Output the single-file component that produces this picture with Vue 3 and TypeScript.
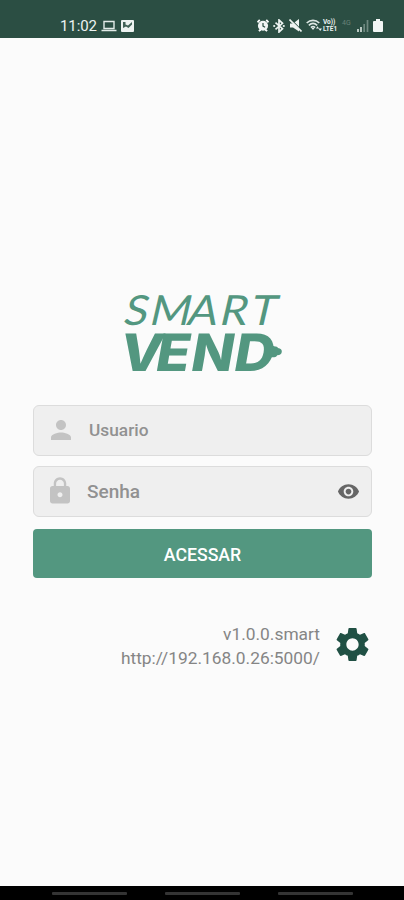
<script setup lang="ts">
import { ref } from 'vue'

const smartX = '2 26.500 62 92.500 121'
const vendX = '-2.400 31.200 64 103.600'
const user = ref('')
const password = ref('')
const visible = ref(false)
</script>

<template>
  <div class="screen">
    <header class="status">
      <div class="left">
        <span class="clock">11:02</span>
        <svg width="16" height="12" viewBox="0 0 16 12"><path d="M3 1.5h10v7H3zM.5 10.5h15" fill="none" stroke="#e2ebe8" stroke-width="1.4" /></svg>
        <svg width="13" height="12" viewBox="0 0 13 12"><rect width="13" height="12" rx="1" fill="#edf3f1" /><path d="M2 8V2h2.500v2.500L7 5.500 11 2v2.500L7.500 8 5 6.500z" fill="#416257" /></svg>
      </div>
      <div class="right">
        <svg width="12" height="13" viewBox="0 0 13 13"><path d="M.5 3L3 .5M12.5 3L10 .5M2 12.500L4 11M11 12.500L9 11" stroke="#fff" stroke-width="2" /><circle cx="6.500" cy="6.800" r="5.500" fill="#f2f6f5" /><path d="M6.500 3.700v3.500l2.300 1.200" fill="none" stroke="#2b4e43" stroke-width="1.300" /></svg>
        <svg width="12" height="14" viewBox="0 0 12 14"><path d="M2.500 3.700l7 6L6 13V1l3.500 3.300-7 6" fill="none" stroke="#eef4f2" stroke-width="1.700" /><circle cx="1.200" cy="7" r="1.100" fill="#eef4f2" /><circle cx="10.800" cy="7" r="1.100" fill="#eef4f2" /></svg>
        <svg width="13" height="13" viewBox="0 0 13 13"><path d="M1 4.500h3L10 0v12.500L4 8.500H1z" fill="#eef4f2" /><path d="M1.500 0l11.500 11.500" stroke="#2b4e43" stroke-width="1.200" /><path d="M.5.500l12 12" stroke="#eef4f2" stroke-width="1.600" /></svg>
        <svg width="16" height="13" viewBox="0 0 16 13"><path d="M.7 4C4.300.500 9.700.500 13.300 4M2.800 6.300c2.600-2.300 5.800-2.300 8.400 0M4.900 8.600c1.300-1.200 2.900-1.200 4.200 0" fill="none" stroke="#dce6e2" stroke-width="1.600" /><path d="M5.500 9h3L7 11zM10 9.500l1.500-2.300L13 9.500zM12.500 9.500H16L14.200 12z" fill="#eef4f2" /></svg>
        <span class="volte"><span>Vo))</span><span>LTE1</span></span>
        <span class="network">4G</span>
        <svg width="12" height="12" viewBox="0 0 12 12"><path d="M1 9v3M4 7v5" stroke="#dce6e2" stroke-width="1.600" /><path d="M7.200 4v8M10.500 0v12" stroke="#6f8980" stroke-width="1.700" /></svg>
        <svg width="10" height="13" viewBox="0 0 10 13"><path d="M3 0h4v2h2q1 0 1 1v9q0 1-1 1H1q-1 0-1-1V3q0-1 1-1h2z" fill="#f2f6f5" /></svg>
      </div>
    </header>

    <main class="content">
      <svg class="logo" width="164" height="84" viewBox="0 0 164 84" role="img" aria-label="Smart Vend">
        <text class="thin" transform="translate(0 36.500) skewX(-13) scale(1.06 1)" :x="smartX" y="0">SMART</text>
        <text class="heavy" transform="translate(0 82.500) skewX(-10) scale(1.08 1)" :x="vendX" y="0">VEND</text>
        <path d="M151 57l4 1.500q2.500-.5 3 1.500 4 .5 3.800 3.700t-4.500 3.600q-1 2-3 2h-5z" fill="#539780" />
      </svg>

      <form class="form" @submit.prevent>
        <label class="field user">
          <svg class="lead" width="30" height="30" viewBox="0 0 24 24"><path fill="#c3c3c3" d="M12 12c2.210 0 4-1.790 4-4s-1.790-4-4-4-4 1.790-4 4 1.790 4 4 4zm0 2c-2.670 0-8 1.340-8 4v2h16v-2c0-2.660-5.330-4-8-4z" /></svg>
          <input v-model="user" type="text" placeholder="Usuario" />
        </label>
        <label class="field pass">
          <svg class="lead" width="30" height="30" viewBox="0 0 24 24"><path fill="#c3c3c3" d="M18 8h-1V6c0-2.760-2.240-5-5-5S7 3.240 7 6v2H6c-1.100 0-2 .9-2 2v10c0 1.100.9 2 2 2h12c1.100 0 2-.9 2-2V10c0-1.100-.9-2-2-2zm-6 9c-1.100 0-2-.9-2-2s.9-2 2-2 2 .9 2 2-.9 2-2 2zm3.100-9H8.900V6c0-1.710 1.390-3.100 3.100-3.100s3.100 1.390 3.100 3.100v2z" /></svg>
          <input v-model="password" :type="visible ? 'text' : 'password'" placeholder="Senha" />
          <svg class="eye" width="23" height="23" viewBox="0 0 24 24" @click="visible = !visible"><path fill="#666" d="M12 4.500C7 4.500 2.730 7.610 1 12c1.730 4.390 6 7.500 11 7.500s9.270-3.110 11-7.500c-1.730-4.390-6-7.500-11-7.500zM12 17c-2.760 0-5-2.240-5-5s2.240-5 5-5 5 2.240 5 5-2.240 5-5 5zm0-8c-1.660 0-3 1.340-3 3s1.340 3 3 3 3-1.340 3-3-1.340-3-3-3z" /></svg>
        </label>
        <button class="submit" type="submit">ACESSAR</button>
      </form>

      <section class="info">
        <div class="lines">
          <span class="version">v1.0.0.smart</span>
          <span class="url">http://192.168.0.26:5000/</span>
        </div>
        <svg class="gear" width="41" height="41" viewBox="0 0 24 24"><path fill="#205044" d="M19.140 12.940c.04-.3.060-.61.060-.94 0-.32-.02-.64-.07-.94l2.030-1.580c.18-.14.230-.41.120-.61l-1.920-3.320c-.12-.22-.37-.29-.59-.22l-2.390.96c-.5-.38-1.030-.7-1.620-.94l-.36-2.540c-.04-.24-.24-.41-.48-.41h-3.840c-.24 0-.43.170-.47.410l-.36 2.540c-.59.240-1.130.570-1.620.940l-2.390-.96c-.22-.08-.47 0-.59.220L2.740 8.870c-.12.210-.08.470.12.610l2.030 1.580c-.05.3-.09.630-.09.940s.02.640.07.940l-2.030 1.580c-.18.140-.23.410-.12.610l1.920 3.320c.12.220.37.290.59.220l2.390-.96c.5.380 1.030.7 1.620.940l.36 2.540c.05.240.24.410.48.410h3.840c.24 0 .44-.17.47-.41l.36-2.540c.59-.24 1.130-.56 1.620-.94l2.390.96c.22.080.47 0 .59-.22l1.920-3.320c.12-.22.070-.47-.12-.61l-2.010-1.580zM12 15.600c-1.980 0-3.600-1.620-3.600-3.600s1.620-3.600 3.600-3.600 3.600 1.620 3.600 3.600-1.620 3.600-3.600 3.600z" /></svg>
      </section>
    </main>

    <footer class="nav"><i v-for="n in 3" :key="n" /></footer>
  </div>
</template>

<style>
body {
  background: #fafafa;
}
</style>

<style scoped>
.screen {
  display: flex;
  flex-direction: column;
  width: 100%;
  height: 900px;
  background: #fbfbfb;
  font-family: Roboto, "Liberation Sans", sans-serif;
}
svg {
  display: block;
  flex: none;
}
.status {
  box-sizing: border-box;
  display: flex;
  justify-content: space-between;
  height: 38px;
  padding: 12px 21px 0 60px;
  background: #2b4e43;
  color: #edf3f1;
}
.left,
.right {
  display: flex;
  align-items: center;
  height: 27px;
}
.left {
  gap: 4px;
}
.clock {
  width: 37px;
  font-size: 15px;
  letter-spacing: -0.1px;
}
.right {
  gap: 4px;
}
.volte {
  display: flex;
  flex-direction: column;
  width: 15px;
  margin-left: -3px;
  font-size: 6.500px;
  font-weight: 700;
  line-height: 7px;
}
.network {
  width: 9px;
  margin: -6px 2px 0 0;
  color: #688278;
  font-size: 7px;
}
.content {
  flex: 1;
  padding: 252px 32px 0 33px;
}
.logo {
  margin: -2px 0 0 87px;
  overflow: visible;
}
.thin,
.heavy {
  fill: #539780;
}
.thin {
  font-family: Lato, sans-serif;
  font-size: 41.500px;
  font-weight: 400;
}
.heavy {
  font-family: Inter, sans-serif;
  font-size: 51.500px;
  font-weight: 800;
}
.form {
  display: flex;
  flex-direction: column;
  margin-top: 33px;
}
.field {
  box-sizing: border-box;
  display: flex;
  align-items: center;
  height: 50.500px;
  margin-bottom: 10.500px;
  padding: 0 11px 0 12px;
  border: 1.500px solid #dcdcdc;
  border-radius: 6px;
  background: #efefef;
}
.field input {
  flex: 1;
  min-width: 0;
  padding: 0 0 1px;
  border: 0;
  outline: 0;
  background: none;
  color: #777;
  font-family: Roboto, sans-serif;
  font-weight: 500;
}
.field input::placeholder {
  color: #919191;
  opacity: 1;
}
.user .lead {
  margin-right: 13px;
}
.user input {
  font-size: 17.300px;
}
.pass {
  margin-bottom: 12.500px;
}
.pass .lead {
  margin: 0 12px 0 -1px;
}
.pass input {
  padding-bottom: 0;
  font-size: 19px;
}
.submit {
  height: 49px;
  padding: 2px 0 0;
  border: 0;
  border-radius: 4px;
  background: #539780;
  color: #fff;
  font: 500 17.700px Roboto, sans-serif;
}
.info {
  display: flex;
  justify-content: flex-end;
  align-items: center;
  gap: 12px;
  margin-top: 43px;
}
.gear {
  margin: -2px -1px 0 0;
}
.lines {
  display: flex;
  flex-direction: column;
  align-items: flex-end;
  padding-top: 2px;
  color: #858585;
  font-size: 17.350px;
  font-weight: 400;
  line-height: 23.500px;
}
.nav {
  display: flex;
  gap: 38px;
  height: 14px;
  padding-left: 52px;
  background: #000;
}
.nav i {
  width: 75px;
  height: 3px;
  margin-top: 6px;
  border-radius: 1px;
  background: #343434;
}
</style>
